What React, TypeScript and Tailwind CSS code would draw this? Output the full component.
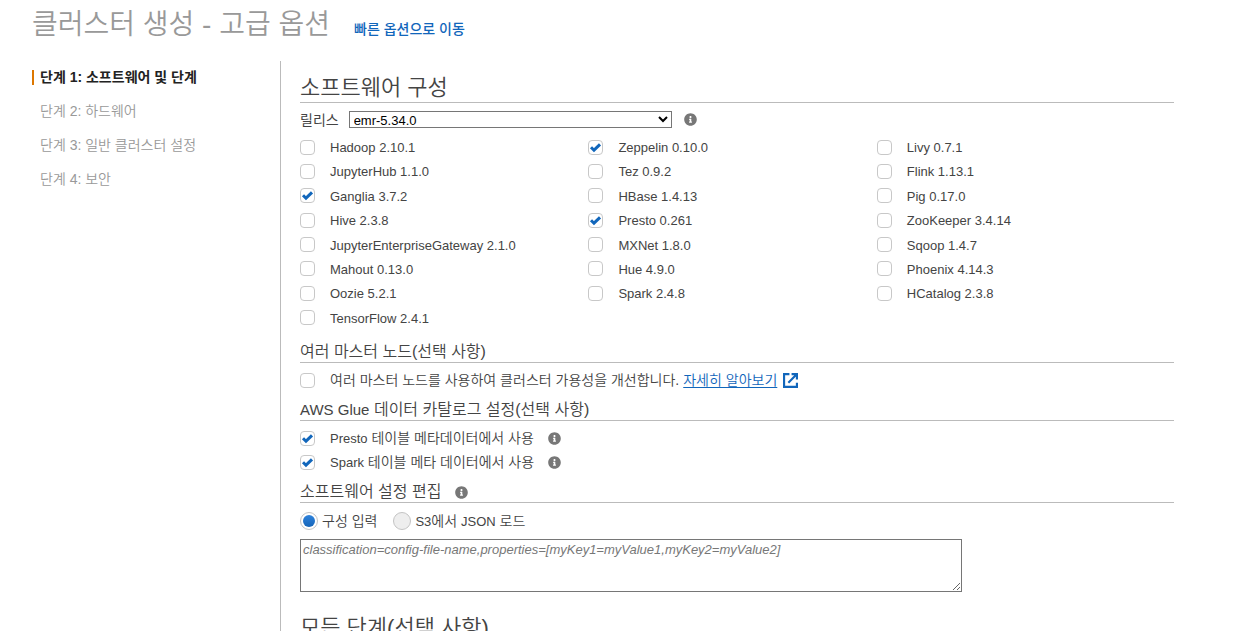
import { useState, type ReactNode } from 'react';
import { FaInfoCircle } from 'react-icons/fa';

interface App {
  name: string;
  enabled?: boolean;
}

const steps = ['단계 1: 소프트웨어 및 단계', '단계 2: 하드웨어', '단계 3: 일반 클러스터 설정', '단계 4: 보안'];

const columns: App[][] = [
  [
    { name: 'Hadoop 2.10.1' },
    { name: 'JupyterHub 1.1.0' },
    { name: 'Ganglia 3.7.2', enabled: true },
    { name: 'Hive 2.3.8' },
    { name: 'JupyterEnterpriseGateway 2.1.0' },
    { name: 'Mahout 0.13.0' },
    { name: 'Oozie 5.2.1' },
    { name: 'TensorFlow 2.4.1' },
  ],
  [
    { name: 'Zeppelin 0.10.0', enabled: true },
    { name: 'Tez 0.9.2' },
    { name: 'HBase 1.4.13' },
    { name: 'Presto 0.261', enabled: true },
    { name: 'MXNet 1.8.0' },
    { name: 'Hue 4.9.0' },
    { name: 'Spark 2.4.8' },
  ],
  [
    { name: 'Livy 0.7.1' },
    { name: 'Flink 1.13.1' },
    { name: 'Pig 0.17.0' },
    { name: 'ZooKeeper 3.4.14' },
    { name: 'Sqoop 1.4.7' },
    { name: 'Phoenix 4.14.3' },
    { name: 'HCatalog 2.3.8' },
  ],
];

const Checkbox = ({ checked, children }: { checked?: boolean; children: ReactNode }) => (
  <label className="flex h-6 items-center">
    <span className="relative mr-[15px] flex size-[15px] shrink-0">
      <input
        type="checkbox"
        defaultChecked={checked}
        className="peer size-[15px] appearance-none rounded-[4px] border border-[#c8c8c8] bg-white"
      />
      <svg
        viewBox="0 0 15 15"
        fill="none"
        stroke="currentColor"
        strokeWidth="3"
        className="pointer-events-none absolute inset-0 hidden size-[15px] text-[#1166bb] peer-checked:block"
      >
        <path d="M3 7.2l3 3L12 4.4" />
      </svg>
    </span>
    <span>{children}</span>
  </label>
);

const Radio = ({ checked, onChange, children }: { checked: boolean; onChange: () => void; children: ReactNode }) => (
  <label className="flex items-center">
    <span className="relative mr-1 flex size-[18px] shrink-0">
      <input
        type="radio"
        name="config"
        checked={checked}
        onChange={onChange}
        className="peer size-[18px] appearance-none rounded-full border border-[#c4c4c4] bg-[#eeeeee] checked:bg-white"
      />
      <span className="pointer-events-none absolute inset-[3px] hidden rounded-full bg-gradient-to-b from-[#2e82dc] to-[#1565b8] peer-checked:block" />
    </span>
    <span>{children}</span>
  </label>
);

const Info = () => (
  <button type="button" aria-label="정보" className="flex text-[#777777]">
    <FaInfoCircle size={13} />
  </button>
);

const SubHeading = ({ children }: { children: ReactNode }) => (
  <h3 className="flex items-center gap-3.5 border-b border-[#bbbbbb] pt-1 text-base/5 font-[350]">{children}</h3>
);

const App = () => {
  const [mode, setMode] = useState('input');

  return (
    <div className="flex h-screen flex-col overflow-hidden bg-white font-['Liberation_Sans','Noto_Sans_CJK_KR',sans-serif] text-[13px]/6 text-[#444444]">
      <header className="flex h-[61px] shrink-0 items-baseline gap-6 pt-[5px] pl-8">
        <h1 className="text-[28px]/10 font-[350] text-[#999999]">클러스터 생성 - 고급 옵션</h1>
        <a href="#quick" className="text-sm font-medium text-[#1166bb]">빠른 옵션으로 이동</a>
      </header>

      <div className="flex min-h-0 grow">
        <nav className="w-[280px] shrink-0 pl-8">
          <ul>
            {steps.map((step, i) => (
              <li key={step} className="flex h-[34px] items-center pb-0.5">
                <a
                  href={`#step-${i + 1}`}
                  className={
                    i === 0
                      ? 'border-l-2 border-[#dd7700] pl-1.5 text-sm/[15px] font-bold text-[#222222]'
                      : 'border-l-2 border-transparent pl-1.5 text-sm/[15px] font-[350] text-[#999999]'
                  }
                >
                  {step}
                </a>
              </li>
            ))}
          </ul>
        </nav>

        <main className="mr-[83px] min-w-0 grow border-l border-[#bbbbbb] pt-[11px] pl-[19px]">
          <h2 className="border-b border-[#bbbbbb] pt-0.5 text-[22px]/7 font-[350]">소프트웨어 구성</h2>

          <div className="mt-2 flex h-[17px] items-center">
            <label htmlFor="release" className="mr-2.5 text-sm">릴리스</label>
            <select id="release" className="mr-3 h-[17px] w-[323px] rounded-none border border-[#767676] bg-white text-[13px]/[13px] text-black">
              <option>emr-5.34.0</option>
            </select>
            <Info />
          </div>

          <div className="mt-[7px] flex">
            {columns.map((apps, i) => (
              <div key={i} className="grid h-[195px] w-[33%] grid-rows-8">
                {apps.map((app) => (
                  <Checkbox key={app.name} checked={app.enabled}>
                    <span className="block pt-0.5">{app.name}</span>
                  </Checkbox>
                ))}
              </div>
            ))}
          </div>

          <div className="mt-2">
            <SubHeading>여러 마스터 노드(선택 사항)</SubHeading>
          </div>
          <div className="mt-[5px] flex items-center text-sm/6 font-[350]">
            <Checkbox>여러 마스터 노드를 사용하여 클러스터 가용성을 개선합니다.</Checkbox>
            <a href="#learn-more" className="ml-1 flex items-center gap-1.5 text-[#1166bb]">
              <span className="underline underline-offset-2">자세히 알아보기</span>
              <svg width="15" height="15" viewBox="0 0 14 14" fill="none" stroke="currentColor" strokeWidth="2">
                <path d="M6 1H1v12h12V9" />
                <path d="M8 1h5v5M13 1L5 9" />
              </svg>
            </a>
          </div>

          <div className="mt-1">
            <SubHeading>
              <span><span className="text-[15px]">AWS Glue</span> 데이터 카탈로그 설정(선택 사항)</span>
            </SubHeading>
          </div>
          <div className="mt-[5px] text-sm/6 font-[350]">
            <div className="flex items-center gap-3.5">
              <Checkbox checked><span className="text-[13px]">Presto</span> 테이블 메타데이터에서 사용</Checkbox>
              <Info />
            </div>
            <div className="flex items-center gap-3.5">
              <Checkbox checked><span className="text-[13px]">Spark</span> 테이블 메타 데이터에서 사용</Checkbox>
              <Info />
            </div>
          </div>

          <div className="mt-1">
            <SubHeading>
              소프트웨어 설정 편집
              <Info />
            </SubHeading>
          </div>
          <div className="mt-[5px] flex h-[26px] items-center gap-4 text-sm font-[350]">
            <Radio checked={mode === 'input'} onChange={() => setMode('input')}>구성 입력</Radio>
            <Radio checked={mode === 's3'} onChange={() => setMode('s3')}>
              <span className="text-[13px]">S3</span>에서 <span className="text-[13px]">JSON</span> 로드
            </Radio>
          </div>
          <textarea
            aria-label="구성 입력"
            placeholder="classification=config-file-name,properties=[myKey1=myValue1,myKey2=myValue2]"
            className="mt-[5px] block h-[53px] w-[662px] max-w-full border border-[#767676] px-0.5 py-0.5 text-[13px]/[15px] italic placeholder:text-[#777777]"
          />

          <h2 className="mt-5 border-b border-[#bbbbbb] pt-0.5 text-[22px]/7 font-[350]">모든 단계(선택 사항)</h2>
        </main>
      </div>
    </div>
  );
};

export default App;
